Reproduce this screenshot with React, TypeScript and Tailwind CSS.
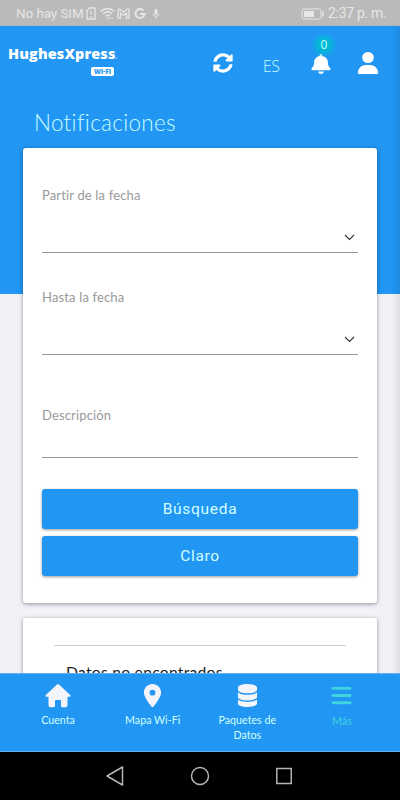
import { clsx } from "clsx"
import type { ReactNode } from "react"
import { FaSyncAlt } from "react-icons/fa"
import { FaBars, FaBell, FaDatabase, FaLocationDot, FaUser } from "react-icons/fa6"
import { MdMic } from "react-icons/md"

const StatusBar = () => {
    return <div className="h-[26px] shrink-0 flex items-center justify-between bg-[#bababa] text-[#e6e6e6] font-['Roboto',sans-serif] pl-4 pr-[14px] pt-[2px] border-b border-[#a9b4bf]">
        <div className="flex items-center">
            <span className="w-[67px] text-[13.5px] tracking-[-0.1px] whitespace-nowrap">No hay SIM</span>
            <svg className="ml-[3px]" width="10" height="13" viewBox="0 0 10 13" fill="none" stroke="currentColor" strokeWidth="1.3">
                <path d="M3.5 1H9v11H1V3.5z" />
                <path d="M5 4v3.5M5 9v1.5" />
            </svg>
            <svg className="ml-1" width="15" height="13" viewBox="0 0 15 13" fill="none" stroke="currentColor" strokeWidth="1.4">
                <path d="M.8 4.500c4-4 9.500-4 13.500 0M3 7c3-2.700 6.500-2.700 9 0M5.500 9.300c1.500-1.200 3-1.200 4 0" />
                <path d="M7.500 10.500v1.500M10 12v-1.500M12.500 11v1" />
            </svg>
            <svg className="ml-[2px]" width="13" height="11" viewBox="0 0 13 11" fill="none" stroke="currentColor" strokeWidth="1.3">
                <path d="M1 10V2.500C1 .8 2 .5 3 1.300L6.500 4 10 1.300C11 .5 12 .8 12 2.500V10H9.500V5L6.500 7.300 3.500 5v5z" />
            </svg>
            <svg className="ml-[4px]" width="12" height="12" viewBox="0 0 11 12" fill="none" stroke="currentColor" strokeWidth="2">
                <path d="M9 2.500A4.500 4.500 0 1 0 10 6H5.500" />
            </svg>
            <MdMic className="ml-[4px]" size={12} />
        </div>
        <div className="flex items-center">
            <svg width="24" height="12" viewBox="0 0 24 12" fill="none" stroke="currentColor">
                <rect x="1" y="1" width="19" height="10" rx="1.500" />
                <path d="M3 3h10v6H3z" fill="currentColor" stroke="none" />
                <path d="M22 3.500v5" strokeWidth="1.500" />
            </svg>
            <span className="ml-[3px] w-[58px] text-[14px] tracking-[-0.3px] whitespace-nowrap">2:37 p. m.</span>
        </div>
    </div>
}

const Header = () => {
    return <header className="flex h-[60px] pl-2 pr-[21px] text-white">
        <div className="w-[205px] pt-[18px]">
            <div className="w-[112px] flex flex-col items-end">
                <span className="w-full font-['Open_Sans',sans-serif] text-[14.5px] leading-[19px] font-extrabold tracking-[0.1px] whitespace-nowrap">
                    HughesXpress<span className="text-[6px] opacity-70">.</span>
                </span>
                <span className="mr-[6px] w-[23px] h-[9px] rounded-[2px] bg-white text-[#2196f3] font-['Open_Sans',sans-serif] text-[6.5px] leading-[9px] font-extrabold text-center">
                    WI-FI
                </span>
            </div>
        </div>
        <div className="flex-1 flex items-start">
            <FaSyncAlt className="mt-[27px] ml-[1px]" size={20} />
            <span className="mt-[28px] ml-[30px] w-[19px] font-['Open_Sans',sans-serif] text-[15.5px] leading-6 font-light text-[#c9ffff]">ES</span>
            <div className="relative mt-[28px] ml-[29px]">
                <FaBell size={20} className="scale-x-110" />
                <span className="absolute left-0 -top-[22px] size-[26px] rounded-full bg-[radial-gradient(circle,#00bcd4_25%,#00bcd400_70%)] font-['Open_Sans',sans-serif] text-[12px] leading-[26px] text-center text-[#c9ffff]">
                    0
                </span>
            </div>
            <FaUser className="mt-[26px] ml-[26px] scale-x-105" size={22} />
        </div>
    </header>
}

type FieldProps = {
    label: string
    select?: boolean
    className?: string
}

const Field = ({ label, select, className }: FieldProps) => {
    return <div className={clsx("flex flex-col justify-between border-b border-[#979797]", className)}>
        <label className="text-[13px] leading-4 tracking-[0.15px] text-[#999999]">{label}</label>
        {select && <svg className="self-end mr-[3px] mb-[11px]" width="11" height="7" viewBox="0 0 11 7" fill="none" stroke="#333" strokeWidth="1.1">
            <path d="M1 1l4.500 4.500L10 1" />
        </svg>}
    </div>
}

const ActionButton = ({ children }: { children: ReactNode }) => {
    return <button className="h-10 pt-px rounded-[3px] bg-[#2196f3] text-[#d2ffff] font-['Roboto',sans-serif] text-[15.5px] tracking-[0.7px] shadow-[0_1px_3px_rgba(0,0,0,0.4)]">
        {children}
    </button>
}

const HomeIcon = () => {
    return <svg width="26" height="24" viewBox="0 0 26 24" fill="currentColor">
        <path d="M12 .6a1.500 1.500 0 0 1 2 0L25.200 11q1 1.500-.7 1.700H22.500v8.500q0 2-2 2H17q-1 0-1-1V17q0-1-1-1h-4q-1 0-1 1v5.200q0 1-1 1H5.500q-2 0-2-2v-8.500H1.500Q-.2 12.500.8 11z" />
    </svg>
}

const tabs = [
    { label: "Cuenta", icon: <HomeIcon /> },
    { label: "Mapa Wi-Fi", icon: <FaLocationDot size={23} /> },
    { label: "Paquetes de Datos", icon: <FaDatabase size={23} className="scale-x-95" /> },
]

const BottomNav = () => {
    return <nav className="h-[79px] shrink-0 flex justify-between px-[18px] bg-[#2196f3] border-y border-[#64aeea]">
        {tabs.map((tab) => <div key={tab.label} className="w-20 pt-[10px] flex flex-col items-center text-[#f4f4fb]">
            <div className="h-6">{tab.icon}</div>
            <span className="mt-[5px] w-[66px] text-center text-[10.7px] leading-[14.5px] text-[#d2ffff]">{tab.label}</span>
        </div>)}
        <div className="w-20 pt-[10px] flex flex-col items-center text-[#3fd4df]">
            <FaBars size={23} />
            <span className="mt-[7px] text-[10.7px] leading-[14.5px]">Más</span>
        </div>
    </nav>
}

const SystemNav = () => {
    return <div className="h-12 shrink-0 flex items-center justify-center gap-[66px] pr-[2px] bg-black text-[#b5b5b5]">
        <svg width="18" height="20" viewBox="0 0 18 20" fill="none" stroke="currentColor" strokeWidth="1.500" strokeLinejoin="round">
            <path d="M16.500 1v18L1 10z" />
        </svg>
        <svg width="20" height="20" viewBox="0 0 20 20" fill="none" stroke="currentColor" strokeWidth="1.500">
            <circle cx="10" cy="10" r="8.500" />
        </svg>
        <svg width="16" height="18" viewBox="1 0 16 18" fill="none" stroke="currentColor" strokeWidth="1.500">
            <path d="M1.800 1.500h14.500v15H1.800z" />
        </svg>
    </div>
}

export default function App() {
    return <div className="w-[400px] h-[800px] flex flex-col overflow-hidden font-['Lato',sans-serif]">
        <StatusBar />
        <main className="flex-1 min-h-0 overflow-hidden bg-[linear-gradient(to_left,rgba(0,0,0,0.08),transparent_8px),linear-gradient(#2196f3_268px,#f1f2f7_268px)]">
            <Header />
            <h1 className="h-[62px] pt-[23px] pl-[34px] text-[22.5px] leading-7 font-light tracking-[0.3px] text-[#c9ffff]">Notificaciones</h1>
            <section className="mx-[23px] h-[455px] px-[19px] pt-[39px] flex flex-col rounded-[3px] bg-white shadow-[0_1px_4px_rgba(0,0,0,0.4)]">
                <Field label="Partir de la fecha" select className="h-[66px]" />
                <Field label="Hasta la fecha" select className="mt-9 h-[66px]" />
                <Field label="Descripción" className="mt-[52px] h-[51px]" />
                <div className="mt-[31px] flex flex-col gap-[7px]">
                    <ActionButton>Búsqueda</ActionButton>
                    <ActionButton>Claro</ActionButton>
                </div>
            </section>
            <section className="mx-[23px] mt-[15px] h-[120px] px-[31px] pt-[27px] rounded-[3px] bg-white shadow-[0_1px_4px_rgba(0,0,0,0.4)]">
                <p className="border-t border-[#cccccc] pt-[16px] pl-3 text-[15.7px] leading-5 tracking-[0.25px] text-[#1b1b1b]">Datos no encontrados</p>
            </section>
        </main>
        <BottomNav />
        <SystemNav />
    </div>
}
